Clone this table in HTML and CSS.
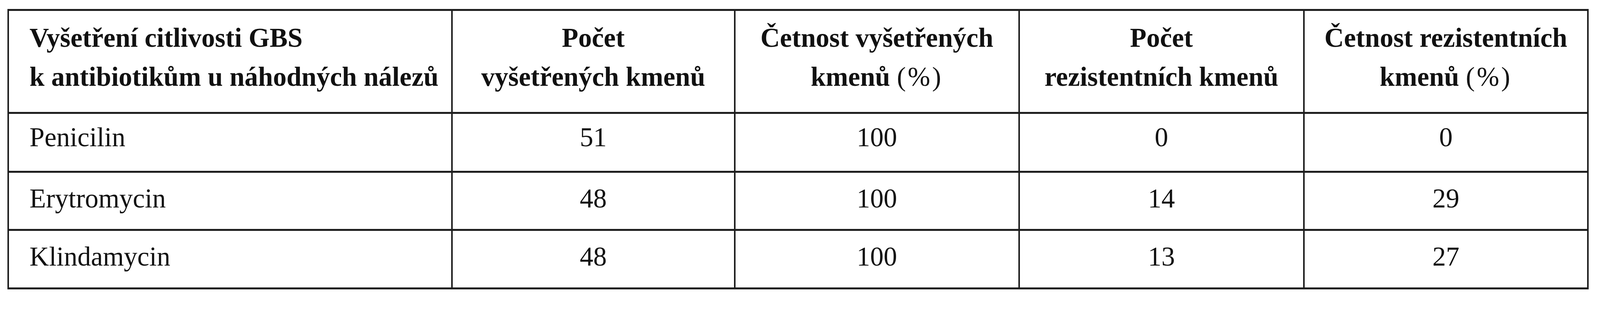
FILE: index.html
```html
<!DOCTYPE html>
<html lang="cs">
<head>
<meta charset="utf-8">
<title>Vyšetření citlivosti GBS</title>
<link rel="stylesheet" href="styles.css">
</head>
<body>
<div class="grid" role="table">
  <div class="row head" role="row">
    <div class="cell first" role="columnheader">Vyšetření citlivosti GBS<br>k antibiotikům u náhodných nálezů</div>
    <div class="cell num" role="columnheader">Počet<br>vyšetřených kmenů</div>
    <div class="cell num" role="columnheader">Četnost vyšetřených<br>kmenů <span class="pct">(%)</span></div>
    <div class="cell num" role="columnheader">Počet<br>rezistentních kmenů</div>
    <div class="cell num" role="columnheader">Četnost rezistentních<br>kmenů <span class="pct">(%)</span></div>
  </div>
  <div class="row body r1" role="row">
    <div class="cell first" role="cell">Penicilin</div>
    <div class="cell num" role="cell">51</div>
    <div class="cell num" role="cell">100</div>
    <div class="cell num" role="cell">0</div>
    <div class="cell num" role="cell">0</div>
  </div>
  <div class="row body" role="row">
    <div class="cell first" role="cell">Erytromycin</div>
    <div class="cell num" role="cell">48</div>
    <div class="cell num" role="cell">100</div>
    <div class="cell num" role="cell">14</div>
    <div class="cell num" role="cell">29</div>
  </div>
  <div class="row body" role="row">
    <div class="cell first" role="cell">Klindamycin</div>
    <div class="cell num" role="cell">48</div>
    <div class="cell num" role="cell">100</div>
    <div class="cell num" role="cell">13</div>
    <div class="cell num" role="cell">27</div>
  </div>
</div>
</body>
</html>
```

FILE: styles.css
```css
:root {
  /* one pixel of the 4984 x 800 design, scaled to the actual window */
  --ux: calc(100vw / 4984);
  --uy: calc(100vh / 800);
}

html, body {
  margin: 0;
  padding: 0;
  background: #ffffff;
  overflow: hidden;
}

body {
  padding: calc(23 * var(--uy)) calc(23 * var(--ux));
  font-family: "Liberation Serif", "Times New Roman", serif;
  font-size: calc(84 * var(--ux));
  line-height: calc(100 * var(--uy));
  color: #111111;
}

.grid {
  display: grid;
  grid-template-columns:
    calc(1377 * var(--ux))
    calc(876 * var(--ux))
    calc(881 * var(--ux))
    calc(882 * var(--ux))
    calc(880 * var(--ux));
  grid-template-rows:
    calc(259 * var(--uy))
    calc(146 * var(--uy))
    calc(144 * var(--uy))
    calc(145 * var(--uy));
  column-gap: calc(5 * var(--ux));
  row-gap: calc(5 * var(--uy));
  padding: calc(5 * var(--uy)) calc(5 * var(--ux));
  background: #1e1e1e;
  width: max-content;
}

.row {
  display: contents;
}

.cell {
  background: #ffffff;
  white-space: nowrap;
  overflow: hidden;
}

.head .cell {
  font-weight: bold;
  padding-top: calc(19 * var(--uy));
}

.pct {
  font-weight: normal;
  letter-spacing: calc(6 * var(--ux));
}

.body .cell {
  padding-top: calc(16 * var(--uy));
}

.body.r1 .cell {
  padding-top: calc(10 * var(--uy));
}

.first {
  text-align: left;
  padding-left: calc(64 * var(--ux));
}

.num {
  text-align: center;
}
```
